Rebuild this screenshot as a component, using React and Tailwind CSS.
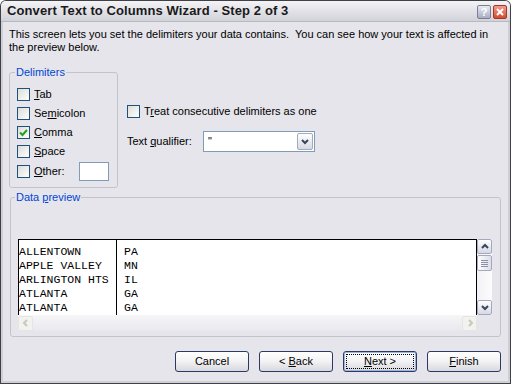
import React from "react";

const font = { fontFamily: '"Liberation Sans", Arial, sans-serif' };

function Check({ checked }) {
  return (
    <span className="w-[13px] h-[13px] shrink-0 border border-[#1c5180] bg-gradient-to-br from-[#dcdcd7] to-white flex items-center justify-center">
      {checked && (
        <svg width="9" height="9" viewBox="0 0 9 9">
          <path d="M1 4.5 L3.5 7 L8 2" stroke="#21a121" strokeWidth="2" fill="none" />
        </svg>
      )}
    </span>
  );
}

function Chevron({ dir = "down", color = "#4d6185" }) {
  const d = {
    down: "M2 3 L5 6 L8 3",
    up: "M2 6 L5 3 L8 6",
    left: "M6 2 L3 5 L6 8",
    right: "M4 2 L7 5 L4 8",
  }[dir];
  return (
    <svg width="10" height="10" viewBox="0 0 10 10">
      <path d={d} stroke={color} strokeWidth="2" fill="none" />
    </svg>
  );
}

function ScrollBtn({ dir, disabled }) {
  return (
    <div
      className={
        "w-[15px] h-[15px] rounded-[2px] flex items-center justify-center border " +
        (disabled
          ? "border-[#e6e6e0] bg-[#f2f2ee]"
          : "border-[#a5a9be] bg-gradient-to-b from-white to-[#d6d8e4]")
      }
    >
      <Chevron dir={dir} color={disabled ? "#c8c8c0" : "#3a4460"} />
    </div>
  );
}

function Btn({ children, def }) {
  return (
    <div
      className={
        "w-[74px] h-[21px] rounded-[3px] border border-[#2b3a63] bg-gradient-to-b from-white via-[#f2f2f4] to-[#d8d8de] flex items-center justify-center text-[11px] text-black " +
        (def ? "p-[2px] shadow-[inset_0_0_0_1px_#9fb4e0]" : "")
      }
    >
      {def ? (
        <div className="w-full h-full border border-dotted border-black flex items-center justify-center">
          <span>{children}</span>
        </div>
      ) : (
        <span>{children}</span>
      )}
    </div>
  );
}

const rows = [
  ["ALLENTOWN", "PA"],
  ["APPLE VALLEY", "MN"],
  ["ARLINGTON HTS", "IL"],
  ["ATLANTA", "GA"],
  ["ATLANTA", "GA"],
];

const delims = [
  { pre: "", u: "T", post: "ab", checked: false },
  { pre: "Se", u: "m", post: "icolon", checked: false },
  { pre: "", u: "C", post: "omma", checked: true },
  { pre: "", u: "S", post: "pace", checked: false },
];

export default function App() {
  return (
    <div
      className="w-[511px] h-[384px] bg-[#404048] p-[1px] rounded-t-[6px] overflow-hidden"
      style={font}
    >
      <div className="w-full h-full flex flex-col bg-[#e5e5eb] rounded-t-[5px]">
        {/* title bar */}
        <div className="h-[21px] shrink-0 flex items-center justify-between pl-[6px] pr-[3px] bg-gradient-to-b from-[#f4f4f6] via-[#e2e2e8] to-[#d2d2da] border-b border-[#b8b8c0] rounded-t-[5px]">
          <span className="text-[13px] font-bold text-[#1a1a1a] tracking-[0.1px]">
            Convert Text to Columns Wizard - Step 2 of 3
          </span>
          <div className="flex gap-[2px] mt-[2px]">
            <div className="w-[14px] h-[14px] rounded-[2px] border border-[#7b7f94] bg-gradient-to-b from-[#e8eaf2] to-[#a8adc4] flex items-center justify-center text-[11px] font-bold text-white leading-none">
              ?
            </div>
            <div className="w-[14px] h-[14px] rounded-[2px] border border-[#9c3a2e] bg-gradient-to-b from-[#f29c8c] to-[#d24a30] flex items-center justify-center">
              <svg width="8" height="8" viewBox="0 0 8 8">
                <path d="M1 1 L7 7 M7 1 L1 7" stroke="white" strokeWidth="2" />
              </svg>
            </div>
          </div>
        </div>
        {/* body frame */}
        <div className="flex-1 flex flex-col border-x-[2px] border-b-[2px] border-[#cfcfd6]">
          <div className="flex-1 flex flex-col px-[6px] pt-[6px] text-[11px] text-black leading-[13px]">
            <p className="w-[490px]">
              This screen lets you set the delimiters your data contains.&nbsp; You can see how your text is affected in the preview below.
            </p>
            <div className="flex mt-[12px]">
              <fieldset className="w-[109px] h-[122px] border border-[#c3c3cb] rounded-[3px] pl-[5px] pb-[5px]">
                <legend className="px-[1px] text-[#0046d5] leading-[13px]">Delimiters</legend>
                <div className="flex flex-col ml-[2px] mt-[6px]">
                  {delims.map((r, i) => (
                    <div key={i} className="h-[19px] flex items-center gap-[4px]">
                      <Check checked={r.checked} />
                      <span>
                        {r.pre}
                        <span className="underline">{r.u}</span>
                        {r.post}
                      </span>
                    </div>
                  ))}
                  <div className="h-[19px] mt-[1px] flex items-center gap-[4px]">
                    <Check />
                    <span>
                      <span className="underline">O</span>ther:
                    </span>
                    <div className="ml-[10px] w-[30px] h-[19px] bg-white border border-[#7f9db9]" />
                  </div>
                </div>
              </fieldset>
              <div className="flex flex-col ml-[9px] mt-[38px]">
                <div className="h-[14px] flex items-center gap-[4px]">
                  <Check />
                  <span>
                    T<span className="underline">r</span>eat consecutive delimiters as one
                  </span>
                </div>
                <div className="flex items-center mt-[13px]">
                  <span className="w-[76px]">
                    Text <span className="underline">q</span>ualifier:
                  </span>
                  <div className="w-[112px] h-[21px] bg-white border border-[#7f9db9] flex items-center justify-between pl-[4px] pr-[1px]">
                    <span className="text-black">&quot;</span>
                    <div className="w-[16px] h-[17px] rounded-[2px] border border-[#a5a9be] bg-gradient-to-b from-white to-[#d6d8e4] flex items-center justify-center">
                      <Chevron dir="down" color="#3a4460" />
                    </div>
                  </div>
                </div>
              </div>
            </div>
            <fieldset className="ml-[1px] mt-[3px] w-[491px] h-[146px] border border-[#c3c3cb] rounded-[3px] pl-[4px] pr-[7px]">
              <legend className="px-[1px] text-[#0046d5] leading-[13px]">
                Data <span className="underline">p</span>review
              </legend>
              <div className="flex mt-[35px] ml-[3px] w-[474px] h-[92px]">
                <div className="flex flex-col w-[459px]">
                  <div
                    className="h-[76px] bg-white border border-b-0 border-black flex overflow-hidden text-[11.5px] leading-[14px]"
                    style={{ fontFamily: '"Liberation Mono", "Courier New", monospace' }}
                  >
                    <div className="w-[98px] border-r border-black pt-[5px]">
                      {rows.map((r, i) => (
                        <div key={i} className="whitespace-pre">{r[0]}</div>
                      ))}
                    </div>
                    <div className="pl-[7px] pt-[5px]">
                      {rows.map((r, i) => (
                        <div key={i}>{r[1]}</div>
                      ))}
                    </div>
                  </div>
                  <div className="h-[16px] bg-gradient-to-b from-[#f6f6f8] to-[#e8e8ee] flex items-center justify-between px-0">
                    <ScrollBtn dir="left" disabled />
                    <ScrollBtn dir="right" disabled />
                  </div>
                </div>
                <div className="w-[15px] h-[76px] flex flex-col justify-between bg-gradient-to-r from-[#f2f2f6] to-[#fcfcfe]">
                  <div className="flex flex-col">
                    <ScrollBtn dir="up" />
                    <div className="w-[15px] h-[16px] mt-[1px] rounded-[2px] border border-[#a5a9be] bg-gradient-to-r from-white to-[#dcdee8] flex flex-col items-center justify-center gap-[1px]">
                      <div className="w-[7px] h-px bg-[#8c90a8]" />
                      <div className="w-[7px] h-px bg-[#8c90a8]" />
                      <div className="w-[7px] h-px bg-[#8c90a8]" />
                      <div className="w-[7px] h-px bg-[#8c90a8]" />
                    </div>
                  </div>
                  <ScrollBtn dir="down" />
                </div>
              </div>
            </fieldset>
            <div className="flex justify-end gap-[10px] mt-[14px] pr-[1px]">
              <Btn>Cancel</Btn>
              <Btn>
                &lt; <span className="underline">B</span>ack
              </Btn>
              <Btn def>
                <span className="underline">N</span>ext &gt;
              </Btn>
              <Btn>
                <span className="underline">F</span>inish
              </Btn>
            </div>
          </div>
        </div>
      </div>
    </div>
  );
}
